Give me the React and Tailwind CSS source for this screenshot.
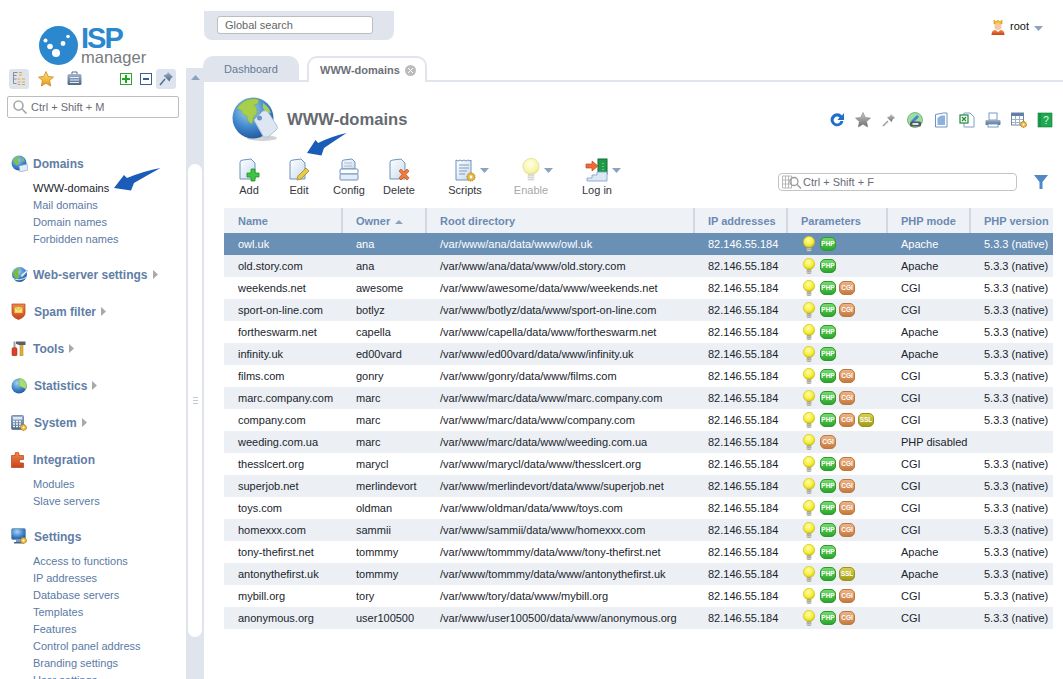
import React from 'react';

const rows = [
  ['owl.uk', 'ana', '/var/www/ana/data/www/owl.uk', ['php'], 'Apache', true],
  ['old.story.com', 'ana', '/var/www/ana/data/www/old.story.com', ['php'], 'Apache', true],
  ['weekends.net', 'awesome', '/var/www/awesome/data/www/weekends.net', ['php', 'cgi'], 'CGI', true],
  ['sport-on-line.com', 'botlyz', '/var/www/botlyz/data/www/sport-on-line.com', ['php', 'cgi'], 'CGI', true],
  ['fortheswarm.net', 'capella', '/var/www/capella/data/www/fortheswarm.net', ['php'], 'Apache', true],
  ['infinity.uk', 'ed00vard', '/var/www/ed00vard/data/www/infinity.uk', ['php'], 'Apache', true],
  ['films.com', 'gonry', '/var/www/gonry/data/www/films.com', ['php', 'cgi'], 'CGI', true],
  ['marc.company.com', 'marc', '/var/www/marc/data/www/marc.company.com', ['php', 'cgi'], 'CGI', true],
  ['company.com', 'marc', '/var/www/marc/data/www/company.com', ['php', 'cgi', 'ssl'], 'CGI', true],
  ['weeding.com.ua', 'marc', '/var/www/marc/data/www/weeding.com.ua', ['cgi'], 'PHP disabled', false],
  ['thesslcert.org', 'marycl', '/var/www/marycl/data/www/thesslcert.org', ['php', 'cgi'], 'CGI', true],
  ['superjob.net', 'merlindevort', '/var/www/merlindevort/data/www/superjob.net', ['php', 'cgi'], 'CGI', true],
  ['toys.com', 'oldman', '/var/www/oldman/data/www/toys.com', ['php', 'cgi'], 'CGI', true],
  ['homexxx.com', 'sammii', '/var/www/sammii/data/www/homexxx.com', ['php', 'cgi'], 'CGI', true],
  ['tony-thefirst.net', 'tommmy', '/var/www/tommmy/data/www/tony-thefirst.net', ['php'], 'Apache', true],
  ['antonythefirst.uk', 'tommmy', '/var/www/tommmy/data/www/antonythefirst.uk', ['php', 'ssl'], 'Apache', true],
  ['mybill.org', 'tory', '/var/www/tory/data/www/mybill.org', ['php', 'cgi'], 'CGI', true],
  ['anonymous.org', 'user100500', '/var/www/user100500/data/www/anonymous.org', ['php', 'cgi'], 'CGI', true],
];

const Defs = () => (
  <svg width="0" height="0" className="absolute">
    <defs>
      <radialGradient id="bulb" cx="0.45" cy="0.35" r="0.7">
        <stop offset="0" stopColor="#fffdb0" />
        <stop offset="0.6" stopColor="#f6ee35" />
        <stop offset="1" stopColor="#c9b900" />
      </radialGradient>
      <radialGradient id="bulbPale" cx="0.45" cy="0.35" r="0.7">
        <stop offset="0" stopColor="#ffffe8" />
        <stop offset="0.7" stopColor="#f7f5a8" />
        <stop offset="1" stopColor="#e3df7c" />
      </radialGradient>
      <radialGradient id="globe" cx="0.4" cy="0.3" r="0.8">
        <stop offset="0" stopColor="#a9d4f5" />
        <stop offset="0.55" stopColor="#3f86cc" />
        <stop offset="1" stopColor="#1b4c92" />
      </radialGradient>
      <linearGradient id="doc" x1="0" y1="0" x2="1" y2="1">
        <stop offset="0" stopColor="#ffffff" />
        <stop offset="1" stopColor="#c9daee" />
      </linearGradient>
      <linearGradient id="steel" x1="0" y1="0" x2="0" y2="1">
        <stop offset="0" stopColor="#9fb4cd" />
        <stop offset="1" stopColor="#4c6685" />
      </linearGradient>
      <linearGradient id="orange" x1="0" y1="0" x2="0" y2="1">
        <stop offset="0" stopColor="#f08a4a" />
        <stop offset="1" stopColor="#c9421a" />
      </linearGradient>
      <linearGradient id="gold" x1="0" y1="0" x2="0" y2="1">
        <stop offset="0" stopColor="#ffe27a" />
        <stop offset="1" stopColor="#e59a16" />
      </linearGradient>
      <linearGradient id="grey" x1="0" y1="0" x2="0" y2="1">
        <stop offset="0" stopColor="#c8c8c8" />
        <stop offset="1" stopColor="#6e6e6e" />
      </linearGradient>
    </defs>
  </svg>
);

const Gear = ({ x, y, r = 3 }) => (
  <g>
    <circle cx={x} cy={y} r={r} fill="#e8b93a" stroke="#a8761a" strokeWidth="1" strokeDasharray="1.2 0.8" />
    <circle cx={x} cy={y} r={r * 0.35} fill="#fff" />
  </g>
);

const Bulb = ({ size = 14, pale, className = '' }) => (
  <svg width={size} height={size * 1.2} viewBox="0 0 14 17" className={`shrink-0 ${className}`}>
    <circle cx="7" cy="6" r="5.7" fill={pale ? 'url(#bulbPale)' : 'url(#bulb)'} stroke={pale ? '#e2de90' : '#c9bb10'} strokeWidth="0.6" />
    <rect x="4.7" y="11.4" width="4.6" height="4.6" rx="1" fill={pale ? '#d8d8d0' : '#9a9a92'} />
    <path d="M4.7 13h4.6M4.7 14.6h4.6" stroke="#eee" strokeWidth="0.6" />
  </svg>
);

const badgeStyles = {
  php: 'bg-gradient-to-b from-[#6fdc6a] to-[#2aa52a] border-[#2c9a2c]',
  cgi: 'bg-gradient-to-b from-[#eeb384] to-[#c77a3c] border-[#bb7a44]',
  ssl: 'bg-gradient-to-b from-[#d9d04a] to-[#a39a14] border-[#9a9320]',
};

const Badge = ({ type }) => (
  <span className={`w-[16px] h-[14px] rounded-[5px] border flex items-center justify-center text-white text-[6.5px] font-bold leading-none ${badgeStyles[type]}`}>
    {type.toUpperCase()}
  </span>
);

const Doc = () => (
  <path d="M3 4.5Q3 2 6 2L14 1l4 4v16H3Z" fill="url(#doc)" stroke="#6f93bf" strokeWidth="1" />
);

const ToolAdd = () => (
  <svg width="24" height="24" viewBox="0 0 24 24">
    <Doc />
    <path d="M14 11h4v4h4v4h-4v4h-4v-4h-4v-4h4Z" fill="#3fc63f" stroke="#1f8f2a" strokeWidth="0.8" />
  </svg>
);

const ToolEdit = () => (
  <svg width="24" height="24" viewBox="0 0 24 24">
    <Doc />
    <path d="M19 10l3 3-8 8-4 1 1-4Z" fill="#e8c94a" stroke="#a08a22" strokeWidth="0.8" />
  </svg>
);

const ToolConfig = () => (
  <svg width="24" height="24" viewBox="0 0 24 24">
    <path d="M5 4Q5 2 7 2l8-1 3 3v7H5Z" fill="url(#doc)" stroke="#6f93bf" />
    <path d="M7 5h8M7 8h8" stroke="#a8bdd6" />
    <rect x="3" y="11" width="18" height="5" rx="1" fill="#fff" stroke="#6f93bf" />
    <rect x="3" y="16" width="18" height="6" rx="1" fill="#e4edf7" stroke="#6f93bf" />
  </svg>
);

const ToolDelete = () => (
  <svg width="24" height="24" viewBox="0 0 24 24">
    <Doc />
    <path d="M12 13l2-2 3 3 3-3 2 2-3 3.5 3 3.5-2 2-3-3-3 3-2-2 3-3.5Z" fill="#ef7a3c" stroke="#c24f1b" strokeWidth="0.7" />
  </svg>
);

const ToolScripts = () => (
  <svg width="24" height="24" viewBox="0 0 24 24">
    <path d="M3 2l2 1 2-1 2 1 2-1 2 1 2-1 2 1 1-1v20H3Z" fill="url(#doc)" stroke="#6f93bf" />
    <path d="M6 7h10M6 10h10M6 13h8M6 16h6" stroke="#7f9abb" />
    <Gear x={18} y={19} r={4} />
  </svg>
);

const ToolLogin = () => (
  <svg width="24" height="24" viewBox="0 0 24 24">
    <rect x="13" y="1" width="9" height="15" fill="#1f9a4a" stroke="#136b33" />
    <path d="M18 5v7" stroke="#b8f0c4" strokeDasharray="1 2" />
    <path d="M2 23v-3h5v-3h5v-3h10v9Z" fill="#dbe8f6" stroke="#7ea0c8" strokeWidth="0.8" />
    <path d="M1 6h6V3l6 5-6 5v-3H1Z" fill="#f0693a" stroke="#c24a1b" strokeWidth="0.7" />
  </svg>
);

const Caret = ({ className = '' }) => (
  <svg width="9" height="5" viewBox="0 0 9 5" className={className}>
    <path d="M0 0h9L4.5 5Z" fill="#8ba3c2" />
  </svg>
);

const LogoMark = () => (
  <svg width="39" height="39" viewBox="0 0 39 39" className="shrink-0">
    <circle cx="19.5" cy="19.5" r="19.5" fill="#2b88cf" />
    <circle cx="6.5" cy="14.5" r="2" fill="#fff" />
    <circle cx="11" cy="20.5" r="2.8" fill="#fff" />
    <circle cx="17" cy="27" r="4" fill="#fff" />
    <circle cx="24" cy="17.5" r="2.4" fill="#fff" />
    <circle cx="29" cy="10.5" r="1.8" fill="#fff" />
  </svg>
);

// sidebar icons, all about 16x16
const MiniGlobe = () => (
  <svg width="17" height="17" viewBox="0 0 17 17">
    <circle cx="8" cy="8" r="7.5" fill="url(#globe)" />
    <path d="M2 5q3-4 6-3 1 2-1 3 2 2 0 5-3 0-3-2-2-1-2-3Z" fill="#7fc24a" />
    <path d="M11 2q3 2 3 5l-3-1Z" fill="#7fc24a" />
    <path d="M8 11l8-2 1 6-8 2Z" fill="#e4eef9" stroke="#7a9ac2" strokeWidth="0.6" />
  </svg>
);

const WebGlobe = () => (
  <svg width="17" height="17" viewBox="0 0 17 17">
    <circle cx="8.5" cy="8.5" r="7.5" fill="url(#globe)" />
    <path d="M2 6q3-4 6-3 1 2-1 3 2 3 0 7-4 0-5-7Z" fill="#79bd3f" />
    <path d="M10 9l6-5q1 0 0 2l-5 5q-1 0-1-2Z" fill="#eef5fc" stroke="#7a9ac2" strokeWidth="0.5" />
    <path d="M1 12q7 4 15-1" fill="none" stroke="#dfeaf7" strokeWidth="1" />
  </svg>
);

const SpamIcon = () => (
  <svg width="15" height="17" viewBox="0 0 15 17">
    <path d="M1 1h13v9q0 4-6.5 6.5Q1 14 1 10Z" fill="url(#orange)" stroke="#b53d14" strokeWidth="0.7" />
    <rect x="3.5" y="4" width="8" height="6" fill="#f8e27a" stroke="#c99a25" strokeWidth="0.5" />
    <path d="M3.5 4l4 3 4-3" fill="none" stroke="#c99a25" strokeWidth="0.6" />
  </svg>
);

const ToolsIcon = () => (
  <svg width="15" height="15" viewBox="0 0 15 15">
    <rect x="9" y="3" width="3" height="12" fill="#e2b13a" stroke="#a87e1c" strokeWidth="0.5" />
    <path d="M5 0.5h9.5v3.5H8Q6 3 5 3Z" fill="#5c5f66" />
    <rect x="2.5" y="0.5" width="2" height="6" fill="#9aa3ad" />
    <rect x="1" y="6.5" width="5" height="8.5" rx="1.5" fill="#d8412a" stroke="#a52a17" strokeWidth="0.5" />
  </svg>
);

const StatsIcon = () => (
  <svg width="16" height="16" viewBox="0 0 16 16">
    <circle cx="8" cy="8" r="7.5" fill="url(#globe)" />
    <path d="M8 8V.5A7.5 7.5 0 0 1 15 11Z" fill="#a6dc7a" stroke="#6aa83e" strokeWidth="0.5" />
  </svg>
);

const SystemIcon = () => (
  <svg width="16" height="16" viewBox="0 0 16 16">
    <rect x="0.5" y="0.5" width="12" height="14" rx="1" fill="url(#steel)" stroke="#46648a" strokeWidth="0.6" />
    <rect x="2" y="2" width="9" height="2.5" fill="#dce8f5" />
    <path d="M2 6.5h9M2 9h9M2 11.5h9" stroke="#eaf1f9" strokeDasharray="2 1" strokeWidth="1.3" />
    <Gear x={12.5} y={12.5} r={3} />
  </svg>
);

const IntegrationIcon = () => (
  <svg width="13" height="16" viewBox="0 0 13 16">
    <path d="M0.5 3.5h3.5V2a2 2 0 0 1 4 0v1.5h4.5v4H10a1.7 1.7 0 0 0 0 3.500h2.500v4.500H.5Z" fill="url(#orange)" stroke="#b53d14" strokeWidth="0.7" />
  </svg>
);

const SettingsIcon = () => (
  <svg width="16" height="17" viewBox="0 0 16 17">
    <rect x="0.5" y="0.5" width="14" height="11" rx="1.5" fill="url(#globe)" stroke="#7d97b8" strokeWidth="0.8" />
    <rect x="5" y="12" width="5" height="2" fill="#7d97b8" />
    <rect x="3" y="14" width="9" height="1.500" fill="#43638d" />
    <Gear x={12.5} y={12.5} r={3} />
  </svg>
);

const nav = [
  { title: 'Domains', icon: <MiniGlobe />, items: ['WWW-domains', 'Mail domains', 'Domain names', 'Forbidden names'] },
  { title: 'Web-server settings', icon: <WebGlobe /> },
  { title: 'Spam filter', icon: <SpamIcon />, shift: true },
  { title: 'Tools', icon: <ToolsIcon /> },
  { title: 'Statistics', icon: <StatsIcon />, shift: true },
  { title: 'System', icon: <SystemIcon />, shift: true },
  { title: 'Integration', icon: <IntegrationIcon />, items: ['Modules', 'Slave servers'] },
  { title: 'Settings', icon: <SettingsIcon />, shift: true, items: ['Access to functions', 'IP addresses', 'Database servers', 'Templates', 'Features', 'Control panel address', 'Branding settings', 'User settings'] },
];

const Sidebar = () => (
  <aside className="w-[186px] shrink-0 h-full overflow-hidden">
    <div className="flex pl-[39px] pt-[26px] h-[67px]">
      <LogoMark />
      <div className="ml-[3px] flex flex-col">
        <span className="text-[29px] leading-[24px] font-bold text-[#2b88cf] tracking-[-2px]">ISP</span>
        <span className="text-[16.500px] leading-[15px] text-[#777b80]">manager</span>
      </div>
    </div>
    <div className="flex items-center pl-[9px] pr-[9px] h-[21px] mt-[1px]">
      <span className="w-[20px] h-[20px] rounded-[3px] bg-[#dde4ee] flex items-center justify-center">
        <svg width="15" height="15" viewBox="0 0 15 15" fill="none">
          <path d="M1.500 1.500h4M1.500 4.500h3M1.500 1.500v11M1.500 8h3M1.500 12.500h3" stroke="#8c8c8c" />
          <path d="M7 1.500h3M7 4h3M5.500 8h3M10 8h3M5.500 11h3M10 11h3M5.500 13.500h3M10 13.500h3" stroke="#e6a63a" />
        </svg>
      </span>
      <svg width="16" height="16" viewBox="0 0 16 16" className="ml-[9px]">
        <path d="M8 .5l2.300 5 5.200.6-3.900 3.500 1.100 5.400L8 12.300 3.300 15l1.100-5.400L.5 6.100l5.200-.6Z" fill="url(#gold)" stroke="#c47a14" strokeWidth="0.7" />
      </svg>
      <svg width="15" height="15" viewBox="0 0 15 15" className="ml-[13px]">
        <path d="M5 3V1h5v2" fill="none" stroke="#56708f" />
        <rect x="0.500" y="3" width="14" height="11" rx="1.500" fill="url(#steel)" />
        <path d="M3 6.500h9M3 9h9M3 11.500h9" stroke="#e6edf5" />
      </svg>
      <span className="ml-[38px] w-[12px] h-[12px] border border-[#2aa52a] flex items-center justify-center">
        <svg width="8" height="8" viewBox="0 0 8 8"><path d="M3 0h2v3h3v2H5v3H3V5H0V3h3Z" fill="#1fa51f" /></svg>
      </span>
      <span className="ml-[8px] w-[12px] h-[12px] border border-[#3c5f90] flex items-center justify-center">
        <span className="w-[6px] h-[2px] bg-[#3c5f90]" />
      </span>
      <span className="ml-[4px] w-[20px] h-[20px] rounded-[3px] bg-[#dde4ee] flex items-center justify-center">
        <svg width="15" height="15" viewBox="0 0 15 15">
          <path d="M9 1l5 5-2 1-1.500 3.500L4.500 4.500 8 3Z" fill="url(#steel)" />
          <path d="M6 8l-5 6" stroke="#52698a" strokeWidth="1.400" />
        </svg>
      </span>
    </div>
    <div className="mx-[7px] mt-[7px] h-[22px] border border-[#bdbdbd] rounded-[2px] flex items-center pl-[5px]">
      <svg width="14" height="14" viewBox="0 0 14 14" fill="none" stroke="#a8a8a8" strokeWidth="1.600">
        <circle cx="5.500" cy="5.500" r="4.500" />
        <path d="M9 9l4.500 4.500" />
      </svg>
      <span className="ml-[4px] text-[11px] text-[#6b6b78]">Ctrl + Shift + M</span>
    </div>
    <nav className="pt-[35px]">
      {nav.map((group) => (
        <div key={group.title} className="pb-[16px]">
          <div className="h-[21px] flex items-center pl-[11px]">
            <span className={`flex items-center ${group.shift ? 'w-[23px]' : 'w-[22px]'}`}>{group.icon}</span>
            <span className="text-[12px] font-bold text-[#5f7ea6]">{group.title}</span>
            {!group.items && (
              <svg width="5" height="9" viewBox="0 0 5 9" className="ml-[5px]">
                <path d="M0 0l5 4.500L0 9Z" fill="#a9a9a9" />
              </svg>
            )}
          </div>
          {group.items && (
            <ul className="mt-[6px]">
              {group.items.map((item) => (
                <li
                  key={item}
                  className={`pl-[33px] h-[17px] leading-[17px] text-[11px] ${item === 'WWW-domains' ? 'text-[#20242c]' : 'text-[#5b7aa5]'}`}
                >
                  {item}
                </li>
              ))}
            </ul>
          )}
        </div>
      ))}
    </nav>
  </aside>
);

const Splitter = () => (
  <div className="w-[18px] shrink-0 mt-[68px] bg-[#e0e5ed] flex flex-col items-center">
    <svg width="9" height="5" viewBox="0 0 9 5" className="mt-[7px]">
      <path d="M4.500 0L9 5H0Z" fill="#8ba3c2" />
    </svg>
    <div className="mt-[84px] w-[14px] h-[473px] bg-white rounded-[7px] flex items-center justify-center">
      <div className="w-[5px] h-[7px] border-y border-[#c3c8cf] flex items-center">
        <div className="w-full h-px bg-[#c3c8cf]" />
      </div>
    </div>
  </div>
);

const PageTop = () => (
  <div className="flex justify-between h-[56px]">
    <div className="mt-[11px] h-[29px] w-[190px] bg-[#e0e5ed] rounded-b-[8px] pl-[13px] pt-[5px]">
      <div className="w-[156px] h-[18px] bg-white border border-[#bdbdbd] rounded-[3px] pl-[7px] text-[11px] leading-[16px] text-[#666]">
        Global search
      </div>
    </div>
    <div className="flex items-center h-[17px] mt-[18px] mr-[20px]">
      <svg width="14" height="16" viewBox="0 0 14 16">
        <path d="M3 1l2 2 2-2 2 2 2-2v4H3Z" fill="#f2c229" stroke="#c48a14" strokeWidth="0.6" />
        <circle cx="7" cy="7.500" r="3.500" fill="#f2c9a2" />
        <path d="M0.500 16q0-5 4-5l2.500 2 2.500-2q4 0 4 5Z" fill="url(#orange)" />
      </svg>
      <span className="ml-[5px] text-[11px] text-[#111]">root</span>
      <Caret className="ml-[5px] mt-[3px]" />
    </div>
  </div>
);

const Tabs = () => (
  <div className="flex h-[26px] border-b-2 border-[#e0e5ed] -ml-px">
    <div className="w-[96px] h-[24px] bg-[#e0e5ed] rounded-t-[10px] text-[11px] leading-[26px] text-center text-[#66799a]">Dashboard</div>
    <div className="ml-[8px] w-[120px] h-[26px] bg-white border-2 border-b-0 border-[#e0e5ed] rounded-t-[10px] flex items-center pl-[11px]">
      <span className="text-[11px] font-bold text-[#6e7078]">WWW-domains</span>
      <span className="ml-[5px] w-[11px] h-[11px] rounded-full bg-[#bcbcbc] flex items-center justify-center">
        <svg width="5" height="5" viewBox="0 0 5 5"><path d="M0 0l5 5M5 0L0 5" stroke="#fff" /></svg>
      </span>
    </div>
  </div>
);

const HeaderIcons = () => (
  <div className="flex items-center gap-[10px] pr-[10px]">
    <svg width="16" height="16" viewBox="0 0 16 16">
      <path d="M13 3.500A6.500 6.500 0 1 0 14.500 9h-3A3.500 3.500 0 1 1 10.500 5.500L8.500 8H15V1Z" fill="#1f6ec9" />
    </svg>
    <svg width="16" height="16" viewBox="0 0 16 16">
      <path d="M8 .5l2.300 5 5.200.6-3.900 3.500 1.100 5.400L8 12.300 3.300 15l1.100-5.400L.5 6.100l5.200-.6Z" fill="url(#grey)" stroke="#777" strokeWidth="0.5" />
    </svg>
    <svg width="16" height="16" viewBox="0 0 16 16">
      <path d="M10 2l4 4-2 1-1.500 3L6 5.500 9 4Z" fill="url(#grey)" />
      <path d="M7 9l-5 5" stroke="#999" strokeWidth="1.500" />
    </svg>
    <svg width="16" height="16" viewBox="0 0 16 16">
      <circle cx="8" cy="8" r="7.500" fill="#9fdca4" stroke="#4ea35a" strokeWidth="0.7" />
      <path d="M4 9l6-6 2 2-6 6Z" fill="#3f86cc" />
      <rect x="3" y="9.500" width="11" height="5" rx="1.500" fill="#55595f" />
      <rect x="5.500" y="11" width="6" height="2" fill="#dfe3e8" />
    </svg>
    <svg width="16" height="16" viewBox="0 0 16 16">
      <path d="M2.500 2.500l8-1.500H14v14H2.500Z" fill="#fff" stroke="#6f93bf" />
      <path d="M4.500 6L8 3.500h4v9.500H4.500Z" fill="#8fb0dc" />
    </svg>
    <svg width="16" height="16" viewBox="0 0 16 16">
      <path d="M5 1h6l4 4v10H5Z" fill="#fff" stroke="#7ea0c8" />
      <rect x="1" y="3" width="8" height="8" fill="#fff" stroke="#1d8a36" strokeWidth="1.200" />
      <path d="M3 5l4 4M7 5L3 9" stroke="#1d8a36" strokeWidth="1.200" />
    </svg>
    <svg width="16" height="16" viewBox="0 0 16 16">
      <rect x="4" y="1" width="8" height="7" fill="#fff" stroke="#7b9cc4" />
      <rect x="0.500" y="8" width="15" height="5" rx="1" fill="url(#steel)" />
      <rect x="3" y="12" width="10" height="3" fill="#fff" stroke="#7b9cc4" />
    </svg>
    <svg width="16" height="16" viewBox="0 0 16 16">
      <rect x="0.500" y="1" width="12" height="12" fill="#fff" stroke="#6c87a8" />
      <rect x="0.500" y="1" width="12" height="3" fill="#5f7fa8" />
      <path d="M4.500 4v9M8.500 4v9M1 7.500h11M1 10.500h11" stroke="#9fb2c9" />
      <Gear x={12.500} y={12.500} r={3} />
    </svg>
    <svg width="16" height="16" viewBox="0 0 16 16">
      <rect x="1" y="1" width="14" height="14" fill="#1fa84f" stroke="#11783a" strokeWidth="0.6" />
      <path d="M3 1v14" stroke="#12803c" />
      <text x="9" y="12" textAnchor="middle" fontSize="10" fill="#e8fbe8">?</text>
    </svg>
  </div>
);

const BigGlobe = () => (
  <svg width="48" height="46" viewBox="0 0 48 46" className="shrink-0">
    <ellipse cx="30" cy="41" rx="15" ry="3" fill="#cfd3d8" />
    <circle cx="21" cy="21" r="20.500" fill="url(#globe)" />
    <path d="M5 11Q13 0 26 2q2 3-1 5l-3 1q5 5 2 10l-2 1-2 8q-5-2-5-8-5-1-6-6-4-1-4-2Z" fill="#a8cf4a" stroke="#7a9f2c" strokeWidth="0.4" />
    <path d="M31 6q6 4 8 10l-5-1-3-4Z" fill="#a8cf4a" />
    <path d="M22 23l9-9q3-1 5 1l9 14q1 3-1 4l-8 7q-3 1-5-1Z" fill="#dce7f3" stroke="#aebfd3" />
    <circle cx="27.500" cy="21" r="2.500" fill="#6d93c4" />
  </svg>
);

const ToolButton = ({ label, icon, wide, caret, disabled }) => (
  <div className={`flex flex-col items-center ${wide ? 'w-[66px]' : 'w-[50px]'}`}>
    <div className="flex items-center h-[24px]">
      {caret && <span className="w-[12px]" />}
      {icon}
      {caret && <Caret className="ml-[3px]" />}
    </div>
    <span className={`mt-[1px] text-[11px] leading-[14px] ${disabled ? 'text-[#a8a8a8]' : 'text-[#33373d]'}`}>{label}</span>
  </div>
);

const Toolbar = () => (
  <div className="flex items-start pl-[20px] pr-[15px] mt-[15px] h-[50px]">
    <ToolButton label="Add" icon={<ToolAdd />} />
    <ToolButton label="Edit" icon={<ToolEdit />} />
    <ToolButton label="Config" icon={<ToolConfig />} />
    <ToolButton label="Delete" icon={<ToolDelete />} />
    <div className="w-[8px]" />
    <ToolButton wide caret label="Scripts" icon={<ToolScripts />} />
    <ToolButton wide caret disabled label="Enable" icon={<Bulb size={20} pale />} />
    <ToolButton wide caret label="Log in" icon={<ToolLogin />} />
    <div className="ml-auto mt-[15px] flex items-center">
      <div className="w-[239px] h-[18px] border border-[#c4c4c4] rounded-[4px] flex items-center pl-[3px]">
        <svg width="20" height="14" viewBox="0 0 20 14" fill="none">
          <path d="M.5 1h9v12h-9ZM.5 5h9M.5 9h9M3.500 1v12M6.500 1v12" stroke="#b8b8b8" />
          <circle cx="12" cy="6.500" r="4" stroke="#999" strokeWidth="1.300" />
          <path d="M15 9.500l4 4" stroke="#999" strokeWidth="1.300" />
        </svg>
        <span className="ml-[1px] text-[11px] text-[#6b6b78]">Ctrl + Shift + F</span>
      </div>
      <svg width="14" height="14" viewBox="0 0 14 14" className="ml-[17px]">
        <path d="M0 0h14L8.500 7v7h-3V7Z" fill="#4f8ac7" />
      </svg>
    </div>
  </div>
);

const columns = ['Name', 'Owner', 'Root directory', 'IP addresses', 'Parameters', 'PHP mode', 'PHP version'];

const DomainsTable = () => (
  <div className="ml-[20px] mr-[10px]">
    <table className="w-[829px] table-fixed text-[11px] text-[#20242c]">
      <colgroup>
        <col className="w-[118px]" />
        <col className="w-[84px]" />
        <col className="w-[268px]" />
        <col className="w-[93px]" />
        <col className="w-[100px]" />
        <col className="w-[83px]" />
        <col className="w-[83px]" />
      </colgroup>
      <thead>
        <tr className="h-[25px] bg-[#eef2f6]">
          {columns.map((col, i) => (
            <th key={col} className={`pt-[2px] text-left font-bold text-[#6b8ab3] whitespace-nowrap overflow-hidden ${i === 0 ? 'pl-[14px]' : 'pl-[13px]'} ${i < 6 ? 'border-r-2 border-[#d3d8de]' : ''}`}>
              {col}
              {col === 'Owner' && <svg width="8" height="4" viewBox="0 0 8 4" className="inline ml-[5px] mb-[1px]"><path d="M4 0l4 4H0Z" fill="#8ba3c2" /></svg>}
            </th>
          ))}
        </tr>
      </thead>
      <tbody>
        {rows.map(([name, owner, dir, params, mode, hasVersion], i) => (
          <tr
            key={name}
            className={`h-[22px] ${i === 0 ? 'bg-[#6b90b5] text-white' : i % 2 === 1 ? 'bg-[#ecf0f4]' : 'bg-white'}`}
          >
            <td className="pl-[14px] whitespace-nowrap">{name}</td>
            <td className="pl-[14px] whitespace-nowrap">{owner}</td>
            <td className="pl-[14px] whitespace-nowrap">{dir}</td>
            <td className="pl-[14px] whitespace-nowrap">82.146.55.184</td>
            <td className="pl-[15px]">
              <div className="flex items-center gap-[3px]">
                <Bulb className="mr-px" />
                {params.map((p) => <Badge key={p} type={p} />)}
              </div>
            </td>
            <td className="pl-[14px] whitespace-nowrap">{mode}</td>
            <td className="pl-[14px] whitespace-nowrap">{hasVersion ? '5.3.3 (native)' : ''}</td>
          </tr>
        ))}
      </tbody>
    </table>
  </div>
);

// pointer arrows drawn over the page
const BlueArrow = ({ className, width, height }) => (
  <svg width={width} height={height} viewBox="0 0 47 23" preserveAspectRatio="none" className={`absolute ${className}`}>
    <path d="M0 20L10 7l3 3Q30 3 46.500 0 32 8 20 15l-3 7.500Z" fill="#1b5cb8" />
  </svg>
);

export default function App() {
  return (
    <div className="relative h-screen overflow-hidden bg-white flex font-['Liberation_Sans',Arial,sans-serif]">
      <Defs />
      <Sidebar />
      <Splitter />
      <main className="flex-1 min-w-0">
        <PageTop />
        <Tabs />
        <div className="flex items-center justify-between pl-[28px] pt-[15px] h-[61px]">
          <div className="flex items-center">
            <BigGlobe />
            <h1 className="ml-[7px] text-[16.6px] font-bold text-[#666a70]">WWW-domains</h1>
          </div>
          <HeaderIcons />
        </div>
        <Toolbar />
        <DomainsTable />
      </main>
      <BlueArrow className="left-[114px] top-[168px]" width={47} height={23} />
      <BlueArrow className="left-[307px] top-[133px]" width={40} height={23} />
    </div>
  );
}
